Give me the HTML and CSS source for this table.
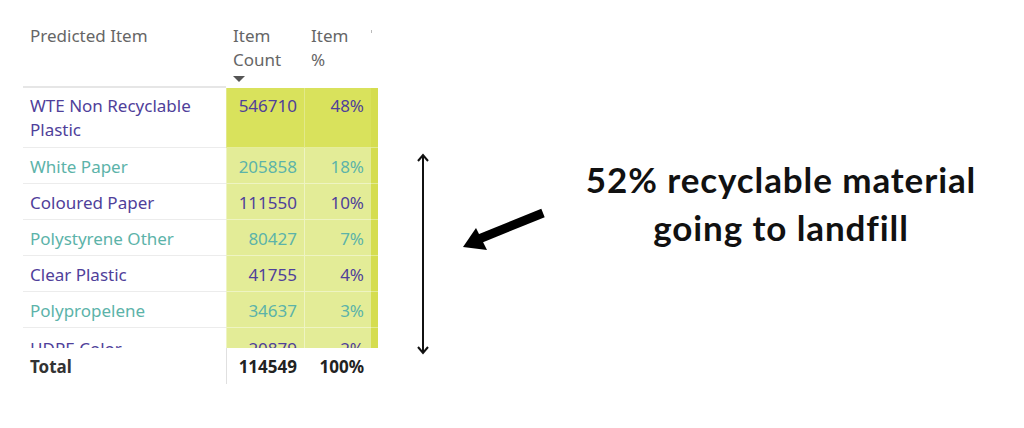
FILE: index.html
```html
<!DOCTYPE html>
<html lang="en">
<head>
    <meta charset="UTF-8">
    <meta name="viewport" content="width=device-width, initial-scale=1.0">
    <title>Predicted Item Breakdown</title>
    <link rel="stylesheet" href="styles.css">
</head>
<body>
    <div class="page">
        <!-- Matrix visual -->
        <div class="matrix">
            <div class="row head">
                <div class="cell name">Predicted Item</div>
                <div class="cell col">Item<br>Count<span class="sort"></span></div>
                <div class="cell col">Item<br>%</div>
                <div class="edge"><span class="tick"></span></div>
            </div>

            <div class="rows">
                <div class="row tall top">
                    <div class="cell name purple">WTE Non Recyclable<br>Plastic</div>
                    <div class="cell num purple">546710</div>
                    <div class="cell num purple">48%</div>
                    <div class="edge"></div>
                </div>
                <div class="row">
                    <div class="cell name teal">White Paper</div>
                    <div class="cell num teal">205858</div>
                    <div class="cell num teal">18%</div>
                    <div class="edge"></div>
                </div>
                <div class="row">
                    <div class="cell name purple">Coloured Paper</div>
                    <div class="cell num purple">111550</div>
                    <div class="cell num purple">10%</div>
                    <div class="edge"></div>
                </div>
                <div class="row">
                    <div class="cell name teal">Polystyrene Other</div>
                    <div class="cell num teal">80427</div>
                    <div class="cell num teal">7%</div>
                    <div class="edge"></div>
                </div>
                <div class="row">
                    <div class="cell name purple">Clear Plastic</div>
                    <div class="cell num purple">41755</div>
                    <div class="cell num purple">4%</div>
                    <div class="edge"></div>
                </div>
                <div class="row">
                    <div class="cell name teal">Polypropelene</div>
                    <div class="cell num teal">34637</div>
                    <div class="cell num teal">3%</div>
                    <div class="edge"></div>
                </div>
                <div class="row last">
                    <div class="cell name purple">HDPE Color</div>
                    <div class="cell num purple">20879</div>
                    <div class="cell num purple">2%</div>
                    <div class="edge"></div>
                </div>
            </div>

            <div class="row total">
                <div class="cell name">Total</div>
                <div class="cell num first">114549</div>
                <div class="cell num">100%</div>
                <div class="edge"></div>
            </div>
        </div>

        <!-- Range marker -->
        <svg class="bounds" width="12" height="204" viewBox="0 0 12 204">
            <line x1="6" y1="3" x2="6" y2="201" stroke="#111" stroke-width="2"/>
            <polyline points="1,9 6,3 11,9" fill="none" stroke="#111" stroke-width="2"/>
            <polyline points="1,195 6,201 11,195" fill="none" stroke="#111" stroke-width="2"/>
        </svg>

        <!-- Pointer arrow -->
        <svg class="pointer" width="86" height="44" viewBox="0 0 86 44">
            <line x1="83" y1="5" x2="14" y2="33" stroke="#000" stroke-width="9"/>
            <polygon points="3,39 16,20 27,42" fill="#000"/>
        </svg>

        <p class="note">52% recyclable material<br>going to landfill</p>
    </div>
</body>
</html>
```

FILE: styles.css
```css
/* Page layout */
body {
    margin: 0;
    background-color: #ffffff;
    font-family: "Noto Sans", "Open Sans", sans-serif;
}

.page {
    display: flex;
    align-items: flex-start;
    width: 1024px;
    height: 428px;
}

/* Matrix table */
.matrix {
    margin-left: 23px;
    margin-top: 20px;
    width: 355px;
    font-size: 17px;
    line-height: 24px;
}

.row {
    display: grid;
    grid-template-columns: 203px 78px 67px 7px;
    height: 36px;
}

.cell {
    padding: 0 7px;
    display: flex;
    align-items: center;
    padding-top: 3px;
    border-bottom: 1px solid #ececec;
}

.head {
    height: 68px;
}

.head .cell {
    display: block;
    color: #666666;
    border-bottom: 2px solid #e6e6e6;
    padding-top: 4px;
}

.head .col {
    border-bottom: none;
}

.sort {
    display: block;
    width: 0;
    height: 0;
    margin-top: 4px;
    border-left: 6px solid transparent;
    border-right: 6px solid transparent;
    border-top: 6px solid #555555;
}

.edge {
    background-color: #d5dd4f;
    border-bottom: 1px solid #e2ea92;
}

.head .edge {
    background: none;
    border: none;
    position: relative;
}

.tick {
    position: absolute;
    left: 0;
    top: 10px;
    width: 1px;
    height: 3px;
    background-color: #bbbbbb;
}

.rows {
    height: 260px;
    overflow: hidden;
}

.tall {
    height: 60px;
}

.last .cell {
    padding-top: 6px;
}

.num {
    justify-content: flex-end;
    background-color: #e3ec97;
    border-bottom: 1px solid #eef4c2;
    border-left: 1px solid #eef4c2;
}

.tall .num {
    background-color: #d9e25c;
    align-items: flex-start;
    padding-top: 6px;
    border-bottom-color: #e6ed9c;
    border-left-color: #e2e98a;
}

.tall .name {
    align-items: flex-start;
    padding-top: 6px;
}

.purple {
    color: #4f409a;
}

.teal {
    color: #5cb3a9;
}

.total {
    height: 36px;
}

.total .cell {
    font-weight: bold;
    color: #333333;
    background: none;
    border: none;
    padding-top: 2px;
}

.total .num {
    color: #222222;
}

.total .first {
    border-left: 1px solid #e0e0e0;
}

.total .edge {
    background: none;
    border: none;
}

/* Annotations */
.bounds {
    margin-left: 39px;
    margin-top: 152px;
}

.pointer {
    margin-left: 31px;
    margin-top: 208px;
}

.note {
    margin: 155px 0 0 25px;
    width: 420px;
    text-align: center;
    font-family: "Lato", "Noto Sans", sans-serif;
    font-weight: bold;
    font-size: 35px;
    letter-spacing: 0.9px;
    line-height: 48px;
    color: #111111;
}
```
